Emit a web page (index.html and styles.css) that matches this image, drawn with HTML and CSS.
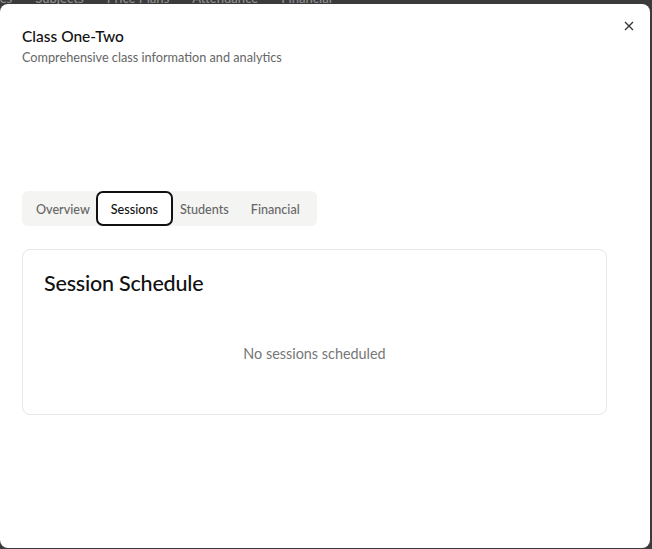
FILE: index.html
```html
<!DOCTYPE html>
<html>
<head>
<meta charset="utf-8">
<link rel="stylesheet" href="styles.css">
</head>
<body>
<div class="page">
  <nav class="page-tabs">
    <span>Classes</span><span>Subjects</span><span>Price Plans</span><span>Attendance</span><span>Financial</span>
  </nav>
</div>
<div class="modal" role="dialog">
  <button class="close" aria-label="Close">
    <svg width="10" height="10" viewBox="0 0 10 10"><path d="M1 1L9 9M9 1L1 9" stroke="#333" stroke-width="1.3" fill="none"/></svg>
  </button>
  <header class="modal-head">
    <h2 class="title">Class One-Two</h2>
    <p class="subtitle">Comprehensive class information and analytics</p>
  </header>
  <div class="tabs">
    <span class="tab tab-first">Overview</span>
    <span class="tab active">Sessions</span>
    <span class="tab tab-after">Students</span>
    <span class="tab tab-last">Financial</span>
  </div>
  <section class="card">
    <h3 class="card-title">Session Schedule</h3>
    <p class="empty">No sessions scheduled</p>
  </section>
</div>
</body>
</html>
```
FILE: styles.css
```css
* { box-sizing: border-box; }
html, body { margin: 0; padding: 0; }
body {
  width: 652px;
  height: 549px;
  overflow: hidden;
  background: #3b3b3b;
  font-family: Lato, "Open Sans", sans-serif;
  position: relative;
}
.page-tabs {
  display: flex;
  gap: 23px;
  margin-top: -10px;
  margin-left: -30px;
  font-size: 13px;
  color: #8a8a8a;
  line-height: 16px;
  font-weight: 600;
}
.modal {
  position: absolute;
  left: 0;
  top: 4px;
  width: 650px;
  height: 544px;
  background: #fff;
  border-radius: 8px;
  padding: 22px 22px 0 22px;
}
.close {
  position: absolute;
  right: 13px;
  top: 14px;
  width: 16px;
  height: 16px;
  border: none;
  background: none;
  padding: 3px;
  display: flex;
  align-items: center;
  justify-content: center;
  cursor: pointer;
}
.modal-head { height: 165px; }
.title {
  margin: 0;
  font-size: 15.5px;
  font-weight: 500;
  color: #111;
  line-height: 20px;
}
.subtitle {
  margin: 2px 0 0;
  font-size: 12.7px;
  color: #666;
  line-height: 18px;
}
.tabs {
  display: inline-flex;
  align-items: center;
  background: #f4f4f3;
  border-radius: 6px;
  padding: 0;
  height: 35px;
}
.tab {
  font-size: 12.6px;
  color: #666;
  font-weight: 500;
  padding: 1px 9px 0;
  height: 35px;
  display: flex;
  align-items: center;
  border: 2px solid transparent;
  border-radius: 7px;
}
.tab-first { padding-left: 12px; padding-right: 4px; }
.tab-after { padding-left: 5px; }
.tab-last { padding-right: 15px; }
.tab.active {
  background: #fff;
  color: #111;
  border-color: #111;
  padding: 1px 12px 0;
  width: 77px;
  justify-content: center;
}
.card {
  margin-top: 23px;
  width: 585px;
  height: 166px;
  border: 1px solid #e6e6e6;
  border-radius: 8px;
  padding: 20px 21px;
}
.card-title {
  margin: 0;
  font-size: 21.5px;
  font-weight: 500;
  color: #111;
  line-height: 26px;
  letter-spacing: -0.2px;
}
.empty {
  margin: 49px 0 0;
  text-align: center;
  font-size: 14.4px;
  color: #777;
  line-height: 18px;
}
```
